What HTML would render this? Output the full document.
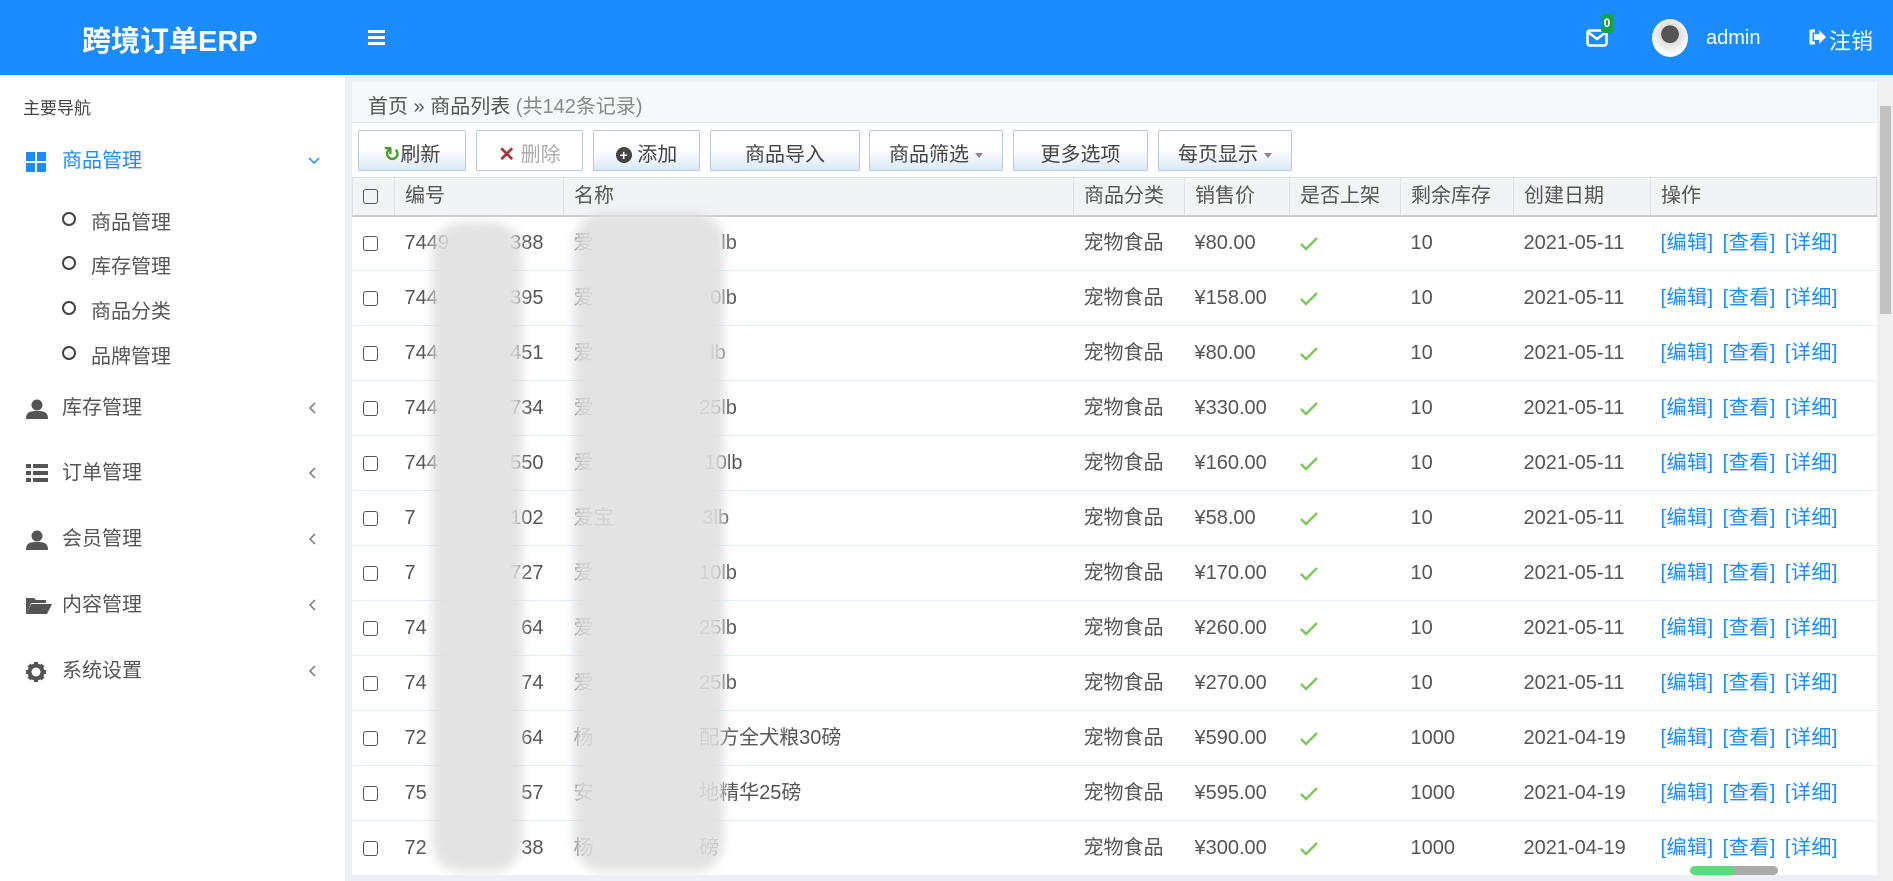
<!DOCTYPE html>
<html><head><meta charset="utf-8">
<style>
*{box-sizing:border-box;margin:0;padding:0}
body{width:1893px;height:881px;overflow:hidden;background:#ecf0f5;font-family:"Liberation Sans","Noto Sans CJK SC",sans-serif;color:#555;position:relative}
.hdr{position:absolute;left:0;top:0;width:1893px;height:75px;background:#1a8cff;color:#fff}
.logo{position:absolute;left:82px;top:18px;font-size:29px;font-weight:bold}
.ham{position:absolute;left:368px;top:30px;width:17px}
.ham i{display:block;height:3px;background:#fff;margin-bottom:3px}
.side{position:absolute;left:0;top:75px;width:345px;height:806px;background:#fff}
.nav-h{position:absolute;left:23px;font-size:17px;color:#444}
.mi{position:absolute;left:62px;font-size:20px;color:#555;line-height:24px}
.ico{position:absolute;left:-36px;top:3px}
.chev{position:absolute;left:247px;top:2px;font-size:19px;color:#777}
.sub{position:absolute;left:91px;font-size:20px;color:#555}
.sub:before{content:"";position:absolute;left:-29px;top:6px;width:10px;height:10px;border:2.5px solid #444;border-radius:50%}
.panel{position:absolute;left:352px;top:82px;width:1525px;height:793px;background:#fff;overflow:hidden}
.bc{height:41px;background:#f5f9fc;border-bottom:1px solid #dde6ee;padding:8px 0 0 16px;font-size:20px;color:#555}
.bc span{color:#888}
.btn{position:absolute;top:48px;height:41px;border:1px solid #b9c9d9;border-radius:2px;background:linear-gradient(#fff 0%,#fff 45%,#dce9f7 100%);font-size:20px;color:#444;padding-top:7px;text-align:center}
.btn .dd{display:inline-block;width:0;height:0;border-left:4px solid transparent;border-right:4px solid transparent;border-top:5px solid #888;margin-left:6px;vertical-align:middle}
table{position:absolute;left:0;top:95px;border-collapse:collapse;table-layout:fixed;width:1525px}
th{height:38px;background:#f2f3f5;border:1px solid #dcdfe3;border-bottom:2px solid #ccc;font-weight:normal;text-align:left;padding-left:10px;font-size:20px;color:#555;line-height:26px;vertical-align:middle}
td{height:55px;border-bottom:1px solid #e3edf7;padding-left:10px;font-size:20px;color:#555;white-space:nowrap;overflow:hidden;line-height:26px;vertical-align:middle}
td span.t{display:inline-block;height:26px;line-height:26px;vertical-align:middle}
.cb{display:inline-block;width:15px;height:15px;border:1.5px solid #555;border-radius:3px;vertical-align:middle}
.ck svg{vertical-align:middle}
.op{color:#1a8cff;word-spacing:3px;letter-spacing:0.5px}
.blur{position:absolute;background:#e0e0e0;filter:blur(5px);opacity:.9}
</style></head><body>
<div class="hdr">
 <div class="logo">跨境订单ERP</div>
 <div class="ham"><i></i><i></i><i></i></div>
 <svg style="position:absolute;left:1586px;top:29px" width="22" height="18" viewBox="0 0 22 18"><rect x="1.5" y="1.5" width="19" height="15" rx="2" fill="none" stroke="#fff" stroke-width="2.5"/><path d="M2 3l9 7 9-7" fill="none" stroke="#fff" stroke-width="2.5"/></svg>
 <div style="position:absolute;left:1601px;top:14px;width:12px;height:19px;background:#16a34a;border-radius:3px;color:#fff;font-size:12px;font-weight:bold;text-align:center;line-height:19px">0</div>
 <div style="position:absolute;left:1652px;top:19px;width:36px;height:38px;border-radius:50%;background:radial-gradient(circle at 50% 40%,#555 0 30%,#ddd 31%,#fff 70%)"></div>
 <div style="position:absolute;left:1706px;top:27px;font-size:20px">admin</div>
 <svg style="position:absolute;left:1808px;top:29px" width="18" height="16" viewBox="0 0 18 16"><path d="M7 2H3v12h4" fill="none" stroke="#fff" stroke-width="3"/><path d="M6 5h5V1l7 7-7 7v-4H6z" fill="#fff"/></svg>
 <div style="position:absolute;left:1829px;top:24px;font-size:22px">注销</div>
</div>
<div class="side">
 <div class="nav-h" style="top:19px">主要导航</div>
 <div class="mi" style="top:74px;color:#1a8cff"><svg class="ico" width="20" height="20"><rect x="0" y="0" width="9" height="9" fill="#1a8cff"/><rect x="11" y="0" width="9" height="9" fill="#1a8cff"/><rect x="0" y="11" width="9" height="9" fill="#1a8cff"/><rect x="11" y="11" width="9" height="9" fill="#1a8cff"/></svg>商品管理<svg style="position:absolute;left:246px;top:8px" width="12" height="8"><path d="M1 1l5 5 5-5" fill="none" stroke="#1a8cff" stroke-width="1.5"/></svg></div>
 <div class="sub" style="top:131px">商品管理</div>
 <div class="sub" style="top:175px">库存管理</div>
 <div class="sub" style="top:220px">商品分类</div>
 <div class="sub" style="top:265px">品牌管理</div>
 <div class="mi" style="top:321px"><svg class="ico" width="22" height="20"><circle cx="11" cy="6" r="5.5" fill="#555"/><path d="M0 20c0-7 4-8 11-8s11 1 11 8z" fill="#555"/></svg>库存管理<svg style="position:absolute;left:246px;top:6px" width="8" height="12"><path d="M7 1L2 6l5 5" fill="none" stroke="#777" stroke-width="1.5"/></svg></div>
 <div class="mi" style="top:386px"><svg class="ico" width="22" height="18"><rect x="0" y="0" width="5" height="4" fill="#555"/><rect x="7" y="0" width="15" height="4" fill="#555"/><rect x="0" y="7" width="5" height="4" fill="#555"/><rect x="7" y="7" width="15" height="4" fill="#555"/><rect x="0" y="14" width="5" height="4" fill="#555"/><rect x="7" y="14" width="15" height="4" fill="#555"/></svg>订单管理<svg style="position:absolute;left:246px;top:6px" width="8" height="12"><path d="M7 1L2 6l5 5" fill="none" stroke="#777" stroke-width="1.5"/></svg></div>
 <div class="mi" style="top:452px"><svg class="ico" width="22" height="20"><circle cx="11" cy="6" r="5.5" fill="#555"/><path d="M0 20c0-7 4-8 11-8s11 1 11 8z" fill="#555"/></svg>会员管理<svg style="position:absolute;left:246px;top:6px" width="8" height="12"><path d="M7 1L2 6l5 5" fill="none" stroke="#777" stroke-width="1.5"/></svg></div>
 <div class="mi" style="top:518px"><svg class="ico" width="26" height="18"><path d="M0 2h8l2 2h10v3H5L0 18z" fill="#555"/><path d="M5 8h21l-5 10H0z" fill="#555"/></svg>内容管理<svg style="position:absolute;left:246px;top:6px" width="8" height="12"><path d="M7 1L2 6l5 5" fill="none" stroke="#777" stroke-width="1.5"/></svg></div>
 <div class="mi" style="top:584px"><svg class="ico" width="20" height="20" viewBox="0 0 20 20"><circle cx="10" cy="10" r="6.5" fill="none" stroke="#555" stroke-width="4"/><g stroke="#555" stroke-width="4"><path d="M10 0v4M10 16v4M0 10h4M16 10h4M3 3l3 3M14 14l3 3M17 3l-3 3M6 14l-3 3"/></g></svg>系统设置<svg style="position:absolute;left:246px;top:6px" width="8" height="12"><path d="M7 1L2 6l5 5" fill="none" stroke="#777" stroke-width="1.5"/></svg></div>
</div>
<div class="panel">
 <div class="bc">首页 » 商品列表 <span>(共142条记录)</span></div>
 <div class="btn" style="left:6px;width:108px"><span style="color:#4a9e2a;font-weight:bold">↻</span>刷新</div>
 <div class="btn" style="left:124px;width:107px;color:#aaa;background:#fff"><span style="color:#a33;font-weight:bold">✕</span> 删除</div>
 <div class="btn" style="left:241px;width:107px"><span style="display:inline-block;width:16px;height:16px;border-radius:50%;background:#444;color:#fff;font-size:14px;line-height:16px;font-weight:bold;vertical-align:1px">+</span> 添加</div>
 <div class="btn" style="left:358px;width:150px">商品导入</div>
 <div class="btn" style="left:517px;width:134px">商品筛选<span class="dd"></span></div>
 <div class="btn" style="left:661px;width:135px">更多选项</div>
 <div class="btn" style="left:806px;width:134px">每页显示<span class="dd"></span></div>
 <table>
  <colgroup><col style="width:42px"><col style="width:169px"><col style="width:510px"><col style="width:111px"><col style="width:105px"><col style="width:111px"><col style="width:113px"><col style="width:137px"><col></colgroup>
  <tr><th><span class="cb"></span></th><th>编号</th><th>名称</th><th>商品分类</th><th>销售价</th><th>是否上架</th><th>剩余库存</th><th>创建日期</th><th>操作</th></tr>
  <tr><td><span class="cb"></span></td><td>7449&nbsp;&nbsp;&nbsp;&nbsp;&nbsp;&nbsp;&nbsp;&nbsp;&nbsp;&nbsp;&nbsp;388</td><td>爱&nbsp;&nbsp;&nbsp;&nbsp;&nbsp;&nbsp;&nbsp;&nbsp;&nbsp;&nbsp;&nbsp;&nbsp;&nbsp;&nbsp;&nbsp;&nbsp;&nbsp;&nbsp;&nbsp;&nbsp;&nbsp;&nbsp;&nbsp;lb</td><td>宠物食品</td><td>¥80.00</td><td class="ck"><svg width="18" height="14"><path d="M1 7l5 5L17 1" fill="none" stroke="#7cc85a" stroke-width="2.5"/></svg></td><td>10</td><td>2021-05-11</td><td class="op">[编辑] [查看] [详细]</td></tr>
  <tr><td><span class="cb"></span></td><td>744&nbsp;&nbsp;&nbsp;&nbsp;&nbsp;&nbsp;&nbsp;&nbsp;&nbsp;&nbsp;&nbsp;&nbsp;&nbsp;395</td><td>爱&nbsp;&nbsp;&nbsp;&nbsp;&nbsp;&nbsp;&nbsp;&nbsp;&nbsp;&nbsp;&nbsp;&nbsp;&nbsp;&nbsp;&nbsp;&nbsp;&nbsp;&nbsp;&nbsp;&nbsp;&nbsp;0lb</td><td>宠物食品</td><td>¥158.00</td><td class="ck"><svg width="18" height="14"><path d="M1 7l5 5L17 1" fill="none" stroke="#7cc85a" stroke-width="2.5"/></svg></td><td>10</td><td>2021-05-11</td><td class="op">[编辑] [查看] [详细]</td></tr>
  <tr><td><span class="cb"></span></td><td>744&nbsp;&nbsp;&nbsp;&nbsp;&nbsp;&nbsp;&nbsp;&nbsp;&nbsp;&nbsp;&nbsp;&nbsp;&nbsp;451</td><td>爱&nbsp;&nbsp;&nbsp;&nbsp;&nbsp;&nbsp;&nbsp;&nbsp;&nbsp;&nbsp;&nbsp;&nbsp;&nbsp;&nbsp;&nbsp;&nbsp;&nbsp;&nbsp;&nbsp;&nbsp;&nbsp;lb</td><td>宠物食品</td><td>¥80.00</td><td class="ck"><svg width="18" height="14"><path d="M1 7l5 5L17 1" fill="none" stroke="#7cc85a" stroke-width="2.5"/></svg></td><td>10</td><td>2021-05-11</td><td class="op">[编辑] [查看] [详细]</td></tr>
  <tr><td><span class="cb"></span></td><td>744&nbsp;&nbsp;&nbsp;&nbsp;&nbsp;&nbsp;&nbsp;&nbsp;&nbsp;&nbsp;&nbsp;&nbsp;&nbsp;734</td><td>爱&nbsp;&nbsp;&nbsp;&nbsp;&nbsp;&nbsp;&nbsp;&nbsp;&nbsp;&nbsp;&nbsp;&nbsp;&nbsp;&nbsp;&nbsp;&nbsp;&nbsp;&nbsp;&nbsp;25lb</td><td>宠物食品</td><td>¥330.00</td><td class="ck"><svg width="18" height="14"><path d="M1 7l5 5L17 1" fill="none" stroke="#7cc85a" stroke-width="2.5"/></svg></td><td>10</td><td>2021-05-11</td><td class="op">[编辑] [查看] [详细]</td></tr>
  <tr><td><span class="cb"></span></td><td>744&nbsp;&nbsp;&nbsp;&nbsp;&nbsp;&nbsp;&nbsp;&nbsp;&nbsp;&nbsp;&nbsp;&nbsp;&nbsp;550</td><td>爱&nbsp;&nbsp;&nbsp;&nbsp;&nbsp;&nbsp;&nbsp;&nbsp;&nbsp;&nbsp;&nbsp;&nbsp;&nbsp;&nbsp;&nbsp;&nbsp;&nbsp;&nbsp;&nbsp;&nbsp;10lb</td><td>宠物食品</td><td>¥160.00</td><td class="ck"><svg width="18" height="14"><path d="M1 7l5 5L17 1" fill="none" stroke="#7cc85a" stroke-width="2.5"/></svg></td><td>10</td><td>2021-05-11</td><td class="op">[编辑] [查看] [详细]</td></tr>
  <tr><td><span class="cb"></span></td><td>7&nbsp;&nbsp;&nbsp;&nbsp;&nbsp;&nbsp;&nbsp;&nbsp;&nbsp;&nbsp;&nbsp;&nbsp;&nbsp;&nbsp;&nbsp;&nbsp;&nbsp;102</td><td>爱宝&nbsp;&nbsp;&nbsp;&nbsp;&nbsp;&nbsp;&nbsp;&nbsp;&nbsp;&nbsp;&nbsp;&nbsp;&nbsp;&nbsp;&nbsp;&nbsp;3lb</td><td>宠物食品</td><td>¥58.00</td><td class="ck"><svg width="18" height="14"><path d="M1 7l5 5L17 1" fill="none" stroke="#7cc85a" stroke-width="2.5"/></svg></td><td>10</td><td>2021-05-11</td><td class="op">[编辑] [查看] [详细]</td></tr>
  <tr><td><span class="cb"></span></td><td>7&nbsp;&nbsp;&nbsp;&nbsp;&nbsp;&nbsp;&nbsp;&nbsp;&nbsp;&nbsp;&nbsp;&nbsp;&nbsp;&nbsp;&nbsp;&nbsp;&nbsp;727</td><td>爱&nbsp;&nbsp;&nbsp;&nbsp;&nbsp;&nbsp;&nbsp;&nbsp;&nbsp;&nbsp;&nbsp;&nbsp;&nbsp;&nbsp;&nbsp;&nbsp;&nbsp;&nbsp;&nbsp;10lb</td><td>宠物食品</td><td>¥170.00</td><td class="ck"><svg width="18" height="14"><path d="M1 7l5 5L17 1" fill="none" stroke="#7cc85a" stroke-width="2.5"/></svg></td><td>10</td><td>2021-05-11</td><td class="op">[编辑] [查看] [详细]</td></tr>
  <tr><td><span class="cb"></span></td><td>74&nbsp;&nbsp;&nbsp;&nbsp;&nbsp;&nbsp;&nbsp;&nbsp;&nbsp;&nbsp;&nbsp;&nbsp;&nbsp;&nbsp;&nbsp;&nbsp;&nbsp;64</td><td>爱&nbsp;&nbsp;&nbsp;&nbsp;&nbsp;&nbsp;&nbsp;&nbsp;&nbsp;&nbsp;&nbsp;&nbsp;&nbsp;&nbsp;&nbsp;&nbsp;&nbsp;&nbsp;&nbsp;25lb</td><td>宠物食品</td><td>¥260.00</td><td class="ck"><svg width="18" height="14"><path d="M1 7l5 5L17 1" fill="none" stroke="#7cc85a" stroke-width="2.5"/></svg></td><td>10</td><td>2021-05-11</td><td class="op">[编辑] [查看] [详细]</td></tr>
  <tr><td><span class="cb"></span></td><td>74&nbsp;&nbsp;&nbsp;&nbsp;&nbsp;&nbsp;&nbsp;&nbsp;&nbsp;&nbsp;&nbsp;&nbsp;&nbsp;&nbsp;&nbsp;&nbsp;&nbsp;74</td><td>爱&nbsp;&nbsp;&nbsp;&nbsp;&nbsp;&nbsp;&nbsp;&nbsp;&nbsp;&nbsp;&nbsp;&nbsp;&nbsp;&nbsp;&nbsp;&nbsp;&nbsp;&nbsp;&nbsp;25lb</td><td>宠物食品</td><td>¥270.00</td><td class="ck"><svg width="18" height="14"><path d="M1 7l5 5L17 1" fill="none" stroke="#7cc85a" stroke-width="2.5"/></svg></td><td>10</td><td>2021-05-11</td><td class="op">[编辑] [查看] [详细]</td></tr>
  <tr><td><span class="cb"></span></td><td>72&nbsp;&nbsp;&nbsp;&nbsp;&nbsp;&nbsp;&nbsp;&nbsp;&nbsp;&nbsp;&nbsp;&nbsp;&nbsp;&nbsp;&nbsp;&nbsp;&nbsp;64</td><td>杨&nbsp;&nbsp;&nbsp;&nbsp;&nbsp;&nbsp;&nbsp;&nbsp;&nbsp;&nbsp;&nbsp;&nbsp;&nbsp;&nbsp;&nbsp;&nbsp;&nbsp;&nbsp;&nbsp;配方全犬粮30磅</td><td>宠物食品</td><td>¥590.00</td><td class="ck"><svg width="18" height="14"><path d="M1 7l5 5L17 1" fill="none" stroke="#7cc85a" stroke-width="2.5"/></svg></td><td>1000</td><td>2021-04-19</td><td class="op">[编辑] [查看] [详细]</td></tr>
  <tr><td><span class="cb"></span></td><td>75&nbsp;&nbsp;&nbsp;&nbsp;&nbsp;&nbsp;&nbsp;&nbsp;&nbsp;&nbsp;&nbsp;&nbsp;&nbsp;&nbsp;&nbsp;&nbsp;&nbsp;57</td><td>安&nbsp;&nbsp;&nbsp;&nbsp;&nbsp;&nbsp;&nbsp;&nbsp;&nbsp;&nbsp;&nbsp;&nbsp;&nbsp;&nbsp;&nbsp;&nbsp;&nbsp;&nbsp;&nbsp;地精华25磅</td><td>宠物食品</td><td>¥595.00</td><td class="ck"><svg width="18" height="14"><path d="M1 7l5 5L17 1" fill="none" stroke="#7cc85a" stroke-width="2.5"/></svg></td><td>1000</td><td>2021-04-19</td><td class="op">[编辑] [查看] [详细]</td></tr>
  <tr><td><span class="cb"></span></td><td>72&nbsp;&nbsp;&nbsp;&nbsp;&nbsp;&nbsp;&nbsp;&nbsp;&nbsp;&nbsp;&nbsp;&nbsp;&nbsp;&nbsp;&nbsp;&nbsp;&nbsp;38</td><td>杨&nbsp;&nbsp;&nbsp;&nbsp;&nbsp;&nbsp;&nbsp;&nbsp;&nbsp;&nbsp;&nbsp;&nbsp;&nbsp;&nbsp;&nbsp;&nbsp;&nbsp;&nbsp;&nbsp;磅</td><td>宠物食品</td><td>¥300.00</td><td class="ck"><svg width="18" height="14"><path d="M1 7l5 5L17 1" fill="none" stroke="#7cc85a" stroke-width="2.5"/></svg></td><td>1000</td><td>2021-04-19</td><td class="op">[编辑] [查看] [详细]</td></tr>
 </table>
 <div class="blur" style="left:80px;top:140px;width:90px;height:650px;border-radius:30px"></div>
 <div class="blur" style="left:222px;top:130px;width:150px;height:660px;border-radius:30px"></div>
</div>
<div style="position:absolute;left:1877px;top:82px;width:16px;height:799px;background:#f0f0f0"></div>
<div style="position:absolute;left:1880px;top:106px;width:11px;height:208px;background:#c1c1c1"></div>
<div style="position:absolute;left:1690px;top:866px;width:88px;height:9px;border-radius:5px;background:linear-gradient(90deg,#5cdb7a 0 50%,#aaa 50%)"></div>
</body></html>
